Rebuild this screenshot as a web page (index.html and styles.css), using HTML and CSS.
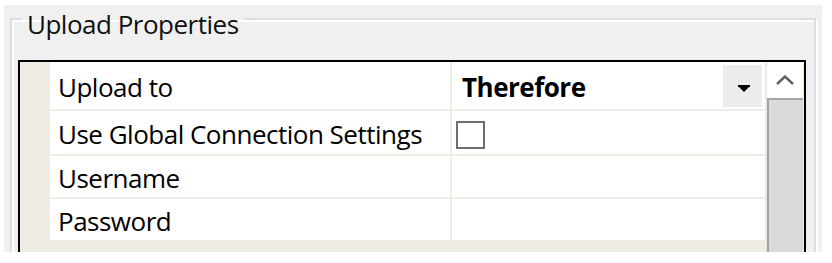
FILE: index.html
```html
<!DOCTYPE html>
<html lang="en">
  <head>
    <meta charset="UTF-8" />
    <title>Upload Properties</title>
    <link rel="stylesheet" href="styles.css">
  </head>
  <body>
    <div class="window">
      <fieldset class="group">
        <legend>Upload Properties</legend>
        <div class="grid">
          <div class="rows">
            <div class="row first">
              <div class="name">Upload to</div>
              <div class="value">
                <b>Therefore</b>
                <span class="drop"><span class="arrow"></span></span>
              </div>
            </div>
            <div class="row second">
              <div class="name">Use Global Connection Settings</div>
              <div class="value"><span class="check"></span></div>
            </div>
            <div class="row">
              <div class="name">Username</div>
              <div class="value"></div>
            </div>
            <div class="row">
              <div class="name">Password</div>
              <div class="value"></div>
            </div>
          </div>
          <div class="scroll">
            <div class="up">
              <svg width="18" height="10" viewBox="0 0 18 10">
                <path d="M1 9 L9 1.5 L17 9" fill="none" stroke="#606060" stroke-width="2.4" />
              </svg>
            </div>
            <div class="thumb"></div>
          </div>
        </div>
      </fieldset>
    </div>
  </body>
</html>
```

FILE: styles.css
```css
body {
  margin: 0;
  padding: 0;
  background: #ffffff;
  font-family: "Segoe UI", "Open Sans", sans-serif;
  font-size: 26px;
  letter-spacing: -0.5px;
  color: #000;
}
.window {
  margin: 5px 0 0 4px;
  width: 818px;
  height: 247px;
  background: #f0f0f0;
  overflow: hidden;
}
.group {
  margin: -6px 6px 0;
  padding: 0 8px 0 6px;
  border: 2px solid #d8dfe4;
  box-shadow: inset 2px 2px 0 #fff, 2px 2px 0 #fff;
  min-width: 0;
}
legend {
  margin-left: 4px;
  padding: 10px 5px 0;
  line-height: 30px;
  color: #111;
}
.grid {
  margin-top: 21px;
  border: 2px solid #000;
  display: flex;
  height: 240px;
  background: #efede3;
}
.rows {
  width: 746px;
  padding-right: 1px;
  box-sizing: border-box;
  display: flex;
  flex-direction: column;
  gap: 2px;
}
.row {
  display: flex;
  margin-left: 30px;
  height: 41px;
  gap: 2px;
}
.row.first {
  height: 47px;
}
.row.second {
  height: 43px;
}
.name {
  width: 400px;
  background: #fff;
  display: flex;
  align-items: center;
  padding: 2px 8px 0;
  box-sizing: border-box;
  white-space: nowrap;
}
.value {
  flex: 1;
  background: #fff;
  display: flex;
  align-items: center;
  padding: 2px 0 0 10px;
  position: relative;
}
.value b {
  font-weight: 700;
}
.drop {
  position: absolute;
  right: 3px;
  top: 3px;
  bottom: 2px;
  width: 39px;
  background: #ececec;
}
.arrow {
  position: absolute;
  left: 16px;
  top: 22px;
  border-left: 5px solid transparent;
  border-right: 5px solid transparent;
  border-top: 5px solid #000;
}
.arrow::before {
  content: "";
  position: absolute;
  left: -6px;
  top: -7px;
  width: 12px;
  height: 2px;
  background: #000;
}
.check {
  width: 29px;
  height: 28px;
  border: 2px solid #6e6e6e;
  box-sizing: border-box;
  margin: 2px 0 0 -6px;
  background: #fff;
}
.scroll {
  width: 36px;
  display: flex;
  flex-direction: column;
  border-left: 1px solid #e6e6e6;
}
.up {
  height: 36px;
  background: #fff;
  display: flex;
  align-items: center;
  justify-content: center;
}
.thumb {
  flex: 1;
  background: #dadada;
  border-top: 2px solid #a4a4a4;
  border-left: 2px solid #a4a4a4;
}
```
